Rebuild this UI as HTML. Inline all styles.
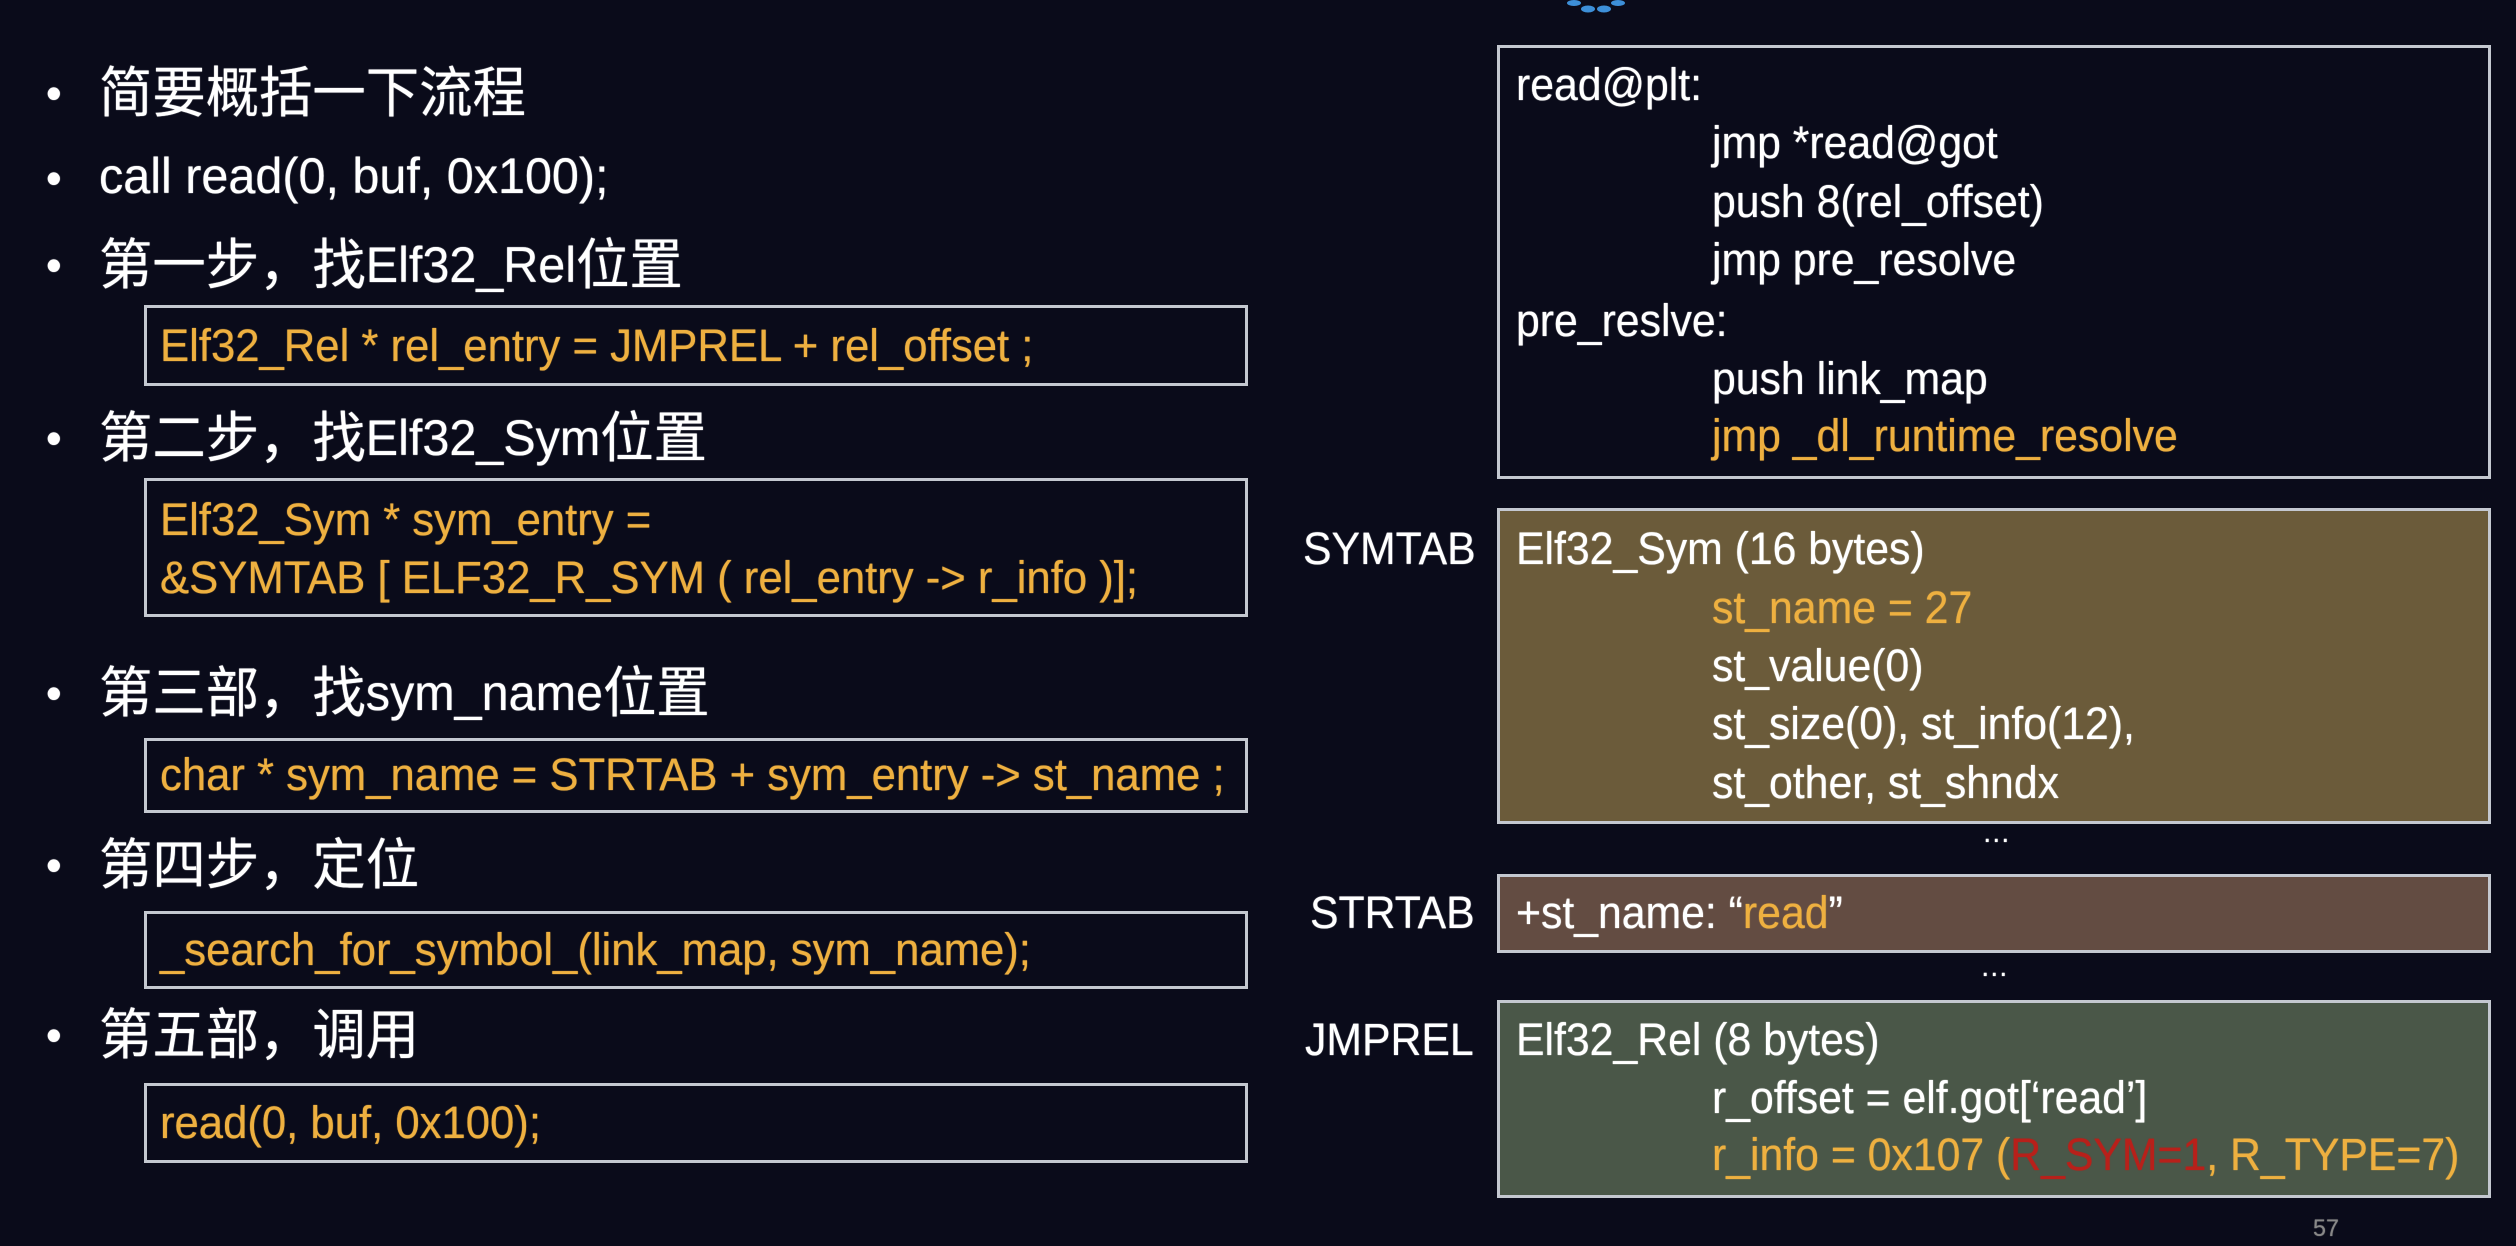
<!DOCTYPE html>
<html><head><meta charset="utf-8"><style>
body{margin:0;width:2516px;height:1246px;background:#0a0b1a;overflow:hidden;position:relative;font-family:"Liberation Sans","Noto Sans CJK SC",sans-serif;color:#fff}
.a{position:absolute;white-space:nowrap;line-height:1;transform:scaleX(.97);transform-origin:left center;text-shadow:0 0 1px currentColor}
.b{font-size:50px}
.b i{font-style:normal;font-size:55px;vertical-align:-2px}
.c{font-size:45px;color:#eeb040}
.r{font-size:45px;transform:scaleX(.95)}
.o{color:#eeb040}
.red{color:#b8201a}
.box{position:absolute;border:3px solid #c4c8d0;box-sizing:border-box}
.dot{position:absolute;font-size:46px}
</style></head><body>
<svg style="position:absolute;left:1560px;top:0" width="70" height="14"><ellipse cx="14" cy="3" rx="7" ry="3" fill="#3d8fd8"/><ellipse cx="28" cy="9" rx="7" ry="3.5" fill="#3d8fd8"/><ellipse cx="44" cy="9" rx="7" ry="3.5" fill="#3d8fd8"/><ellipse cx="58" cy="3" rx="7" ry="3" fill="#3d8fd8"/></svg>

<div class="a dot" style="left:46px;top:70px">•</div>
<div class="a b" style="left:99px;top:66px"><i>简要概括一下流程</i></div>
<div class="a dot" style="left:46px;top:155px">•</div>
<div class="a b" style="left:99px;top:151px">call read(0, buf, 0x100);</div>
<div class="a dot" style="left:46px;top:242px">•</div>
<div class="a b" style="left:99px;top:238px"><i>第一步，找</i>Elf32_Rel<i>位置</i></div>
<div class="box" style="left:144px;top:305px;width:1104px;height:81px"></div>
<div class="a c" style="left:160px;top:323px">Elf32_Rel * rel_entry = JMPREL + rel_offset ;</div>
<div class="a dot" style="left:46px;top:415px">•</div>
<div class="a b" style="left:99px;top:411px"><i>第二步，找</i>Elf32_Sym<i>位置</i></div>
<div class="box" style="left:144px;top:478px;width:1104px;height:139px"></div>
<div class="a c" style="left:160px;top:497px">Elf32_Sym * sym_entry =</div>
<div class="a c" style="left:160px;top:555px">&amp;SYMTAB [ ELF32_R_SYM ( rel_entry -&gt; r_info )];</div>
<div class="a dot" style="left:46px;top:670px">•</div>
<div class="a b" style="left:99px;top:666px"><i>第三部，找</i>sym_name<i>位置</i></div>
<div class="box" style="left:144px;top:738px;width:1104px;height:75px"></div>
<div class="a c" style="left:160px;top:752px">char * sym_name = STRTAB + sym_entry -&gt; st_name ;</div>
<div class="a dot" style="left:46px;top:842px">•</div>
<div class="a b" style="left:99px;top:838px"><i>第四步，定位</i></div>
<div class="box" style="left:144px;top:911px;width:1104px;height:78px"></div>
<div class="a c" style="left:160px;top:927px">_search_for_symbol_(link_map, sym_name);</div>
<div class="a dot" style="left:46px;top:1012px">•</div>
<div class="a b" style="left:99px;top:1008px"><i>第五部，调用</i></div>
<div class="box" style="left:144px;top:1083px;width:1104px;height:80px"></div>
<div class="a c" style="left:160px;top:1100px">read(0, buf, 0x100);</div>

<div class="box" style="left:1497px;top:45px;width:994px;height:434px"></div>
<div class="a r" style="left:1516px;top:62px">read@plt:</div>
<div class="a r" style="left:1712px;top:120px">jmp *read@got</div>
<div class="a r" style="left:1712px;top:179px">push 8(rel_offset)</div>
<div class="a r" style="left:1712px;top:237px">jmp pre_resolve</div>
<div class="a r" style="left:1516px;top:298px">pre_reslve:</div>
<div class="a r" style="left:1712px;top:356px">push link_map</div>
<div class="a r o" style="left:1712px;top:413px">jmp _dl_runtime_resolve</div>

<div class="a r" style="left:1303px;top:526px">SYMTAB</div>
<div class="box" style="left:1497px;top:508px;width:994px;height:316px;background:#6b5b3a"></div>
<div class="a r" style="left:1516px;top:526px">Elf32_Sym (16 bytes)</div>
<div class="a r o" style="left:1712px;top:585px">st_name = 27</div>
<div class="a r" style="left:1712px;top:643px">st_value(0)</div>
<div class="a r" style="left:1712px;top:701px">st_size(0), st_info(12),</div>
<div class="a r" style="left:1712px;top:760px">st_other, st_shndx</div>
<div class="a r" style="left:1982px;top:818px;font-size:30px">…</div>

<div class="a r" style="left:1310px;top:890px">STRTAB</div>
<div class="box" style="left:1497px;top:874px;width:994px;height:79px;background:#634c42"></div>
<div class="a r" style="left:1516px;top:890px">+st_name: “<span class="o">read</span>”</div>
<div class="a r" style="left:1980px;top:952px;font-size:30px">…</div>

<div class="a r" style="left:1305px;top:1017px">JMPREL</div>
<div class="box" style="left:1497px;top:1000px;width:994px;height:198px;background:#4a5748"></div>
<div class="a r" style="left:1516px;top:1017px">Elf32_Rel (8 bytes)</div>
<div class="a r" style="left:1712px;top:1075px">r_offset = elf.got[‘read’]</div>
<div class="a r o" style="left:1712px;top:1132px">r_info = 0x107 (<span class="red">R_SYM=1</span>, R_TYPE=7)</div>

<div class="a" style="left:2313px;top:1217px;font-size:24px;color:#888">57</div>
</body></html>
